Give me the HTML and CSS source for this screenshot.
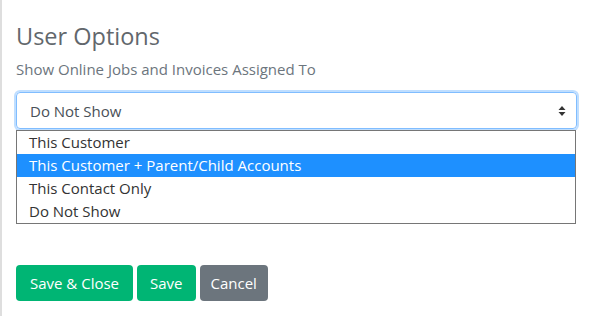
FILE: index.html
```html
<!DOCTYPE html>
<html>
<head>
<meta charset="utf-8">
<link rel="stylesheet" href="styles.css">
</head>
<body>
<div class="panel">
  <h2 class="title">User Options</h2>
  <div class="label">Show Online Jobs and Invoices Assigned To</div>
  <div class="select">
    <span class="select-value">Do Not Show</span>
    <svg class="arrows" width="8" height="12" viewBox="0 0 8 12"><path d="M4 1 L7.5 5 L0.5 5 Z M4 11 L7.5 7 L0.5 7 Z" fill="#333"/></svg>
  </div>
  <ul class="options">
    <li class="option">This Customer</li>
    <li class="option selected">This Customer + Parent/Child Accounts</li>
    <li class="option">This Contact Only</li>
    <li class="option">Do Not Show</li>
  </ul>
  <div class="actions">
    <button class="btn btn-green">Save &amp; Close</button>
    <button class="btn btn-green btn-save">Save</button>
    <button class="btn btn-gray btn-cancel">Cancel</button>
  </div>
</div>
</body>
</html>
```
FILE: styles.css
```css
html, body { margin: 0; padding: 0; background: #fff; }
body { font-family: "Open Sans", "Noto Sans", sans-serif; }
.panel {
  border-left: 2px solid #dedede;
  height: 316px;
  box-sizing: border-box;
  padding: 21px 21px 0 14px;
}
.title {
  margin: 0;
  font-weight: 400;
  font-size: 23.5px;
  line-height: 31px;
  color: #62676c;
}
.label {
  margin-top: 7px;
  font-size: 15px;
  line-height: 21px;
  color: #6c757d;
}
.select {
  margin-top: 12px;
  height: 37px;
  box-sizing: border-box;
  border: 1px solid #80bdff;
  border-radius: 4px;
  box-shadow: 0 0 0 2px rgba(0,123,255,0.25);
  display: flex;
  align-items: center;
  justify-content: space-between;
  padding: 0 10px 0 13px;
  font-size: 15px;
  color: #495057;
}
.options {
  list-style: none;
  margin: 1px 1px 0 0;
  padding: 0;
  border: 1px solid #767676;
  font-size: 15px;
  color: #333;
}
.option {
  height: 23px;
  line-height: 22px;
  padding-left: 12px;
}
.option.selected { background: #1e90ff; color: #fff; }
.actions {
  margin-top: 41px;
  display: flex;
  gap: 4px;
}
.btn {
  font-family: inherit;
  font-size: 15px;
  height: 36px;
  border: none;
  border-radius: 4px;
  color: #fff;
  padding: 0 14px;
}
.btn-save { padding: 0 13px; }
.btn-cancel { padding: 0 11px; }
.btn-green { background: #00b574; }
.btn-gray { background: #6c757d; }
```
